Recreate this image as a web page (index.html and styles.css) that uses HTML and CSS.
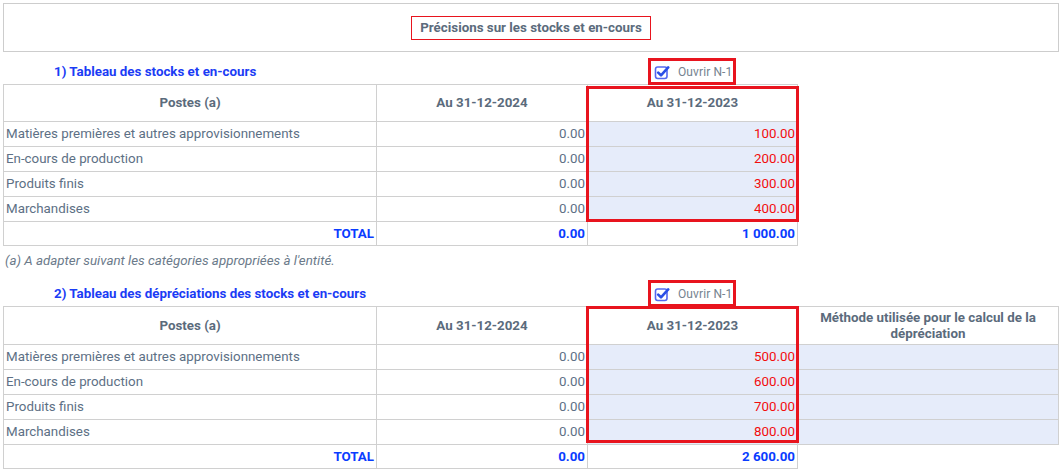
FILE: index.html
```html
<!DOCTYPE html>
<html lang="fr">
<head>
<meta charset="utf-8">
<title>Précisions sur les stocks et en-cours</title>
<link rel="stylesheet" href="styles.css">
</head>
<body>
<div class="page">
  <div class="title-box">
    <div class="title">Précisions sur les stocks et en-cours</div>
  </div>

  <div class="sec-head">
    <div class="sec-title">1) Tableau des stocks et en-cours</div>
    <label class="open-n1">
      <svg class="chk" width="16" height="16" viewBox="0 0 16 16"><rect x="1.5" y="3" width="11.5" height="11.5" rx="2.2" fill="#fff" stroke="#5468f0" stroke-width="1.6"/><path d="M4.2 8.6 L7 11.3 L14.2 3.4" fill="none" stroke="#2a4fe6" stroke-width="2.6" stroke-linecap="round" stroke-linejoin="round"/></svg>
      <span>Ouvrir N-1</span>
    </label>
  </div>

  <div class="tbl-wrap">
    <table class="tbl t1">
      <colgroup><col class="c1"><col class="c2"><col class="c3"></colgroup>
      <tr class="hrow"><th>Postes (a)</th><th>Au 31-12-2024</th><th>Au 31-12-2023</th></tr>
      <tr><td class="lbl">Matières premières et autres approvisionnements</td><td class="num">0.00</td><td class="num n1">100.00</td></tr>
      <tr><td class="lbl">En-cours de production</td><td class="num">0.00</td><td class="num n1">200.00</td></tr>
      <tr><td class="lbl">Produits finis</td><td class="num">0.00</td><td class="num n1">300.00</td></tr>
      <tr><td class="lbl">Marchandises</td><td class="num">0.00</td><td class="num n1">400.00</td></tr>
      <tr class="total"><td class="num">TOTAL</td><td class="num">0.00</td><td class="num">1 000.00</td></tr>
    </table>
    <div class="hl hl1"></div>
  </div>

  <div class="note">(a) A adapter suivant les catégories appropriées à l'entité.</div>

  <div class="sec-head">
    <div class="sec-title">2) Tableau des dépréciations des stocks et en-cours</div>
    <label class="open-n1">
      <svg class="chk" width="16" height="16" viewBox="0 0 16 16"><rect x="1.5" y="3" width="11.5" height="11.5" rx="2.2" fill="#fff" stroke="#5468f0" stroke-width="1.6"/><path d="M4.2 8.6 L7 11.3 L14.2 3.4" fill="none" stroke="#2a4fe6" stroke-width="2.6" stroke-linecap="round" stroke-linejoin="round"/></svg>
      <span>Ouvrir N-1</span>
    </label>
  </div>

  <div class="tbl-wrap">
    <table class="tbl t2">
      <colgroup><col class="c1"><col class="c2"><col class="c3"><col class="c4"></colgroup>
      <tr class="hrow h2"><th>Postes (a)</th><th>Au 31-12-2024</th><th>Au 31-12-2023</th><th>Méthode utilisée pour le calcul de la dépréciation</th></tr>
      <tr><td class="lbl">Matières premières et autres approvisionnements</td><td class="num">0.00</td><td class="num n1">500.00</td><td class="fill"></td></tr>
      <tr><td class="lbl">En-cours de production</td><td class="num">0.00</td><td class="num n1">600.00</td><td class="fill"></td></tr>
      <tr><td class="lbl">Produits finis</td><td class="num">0.00</td><td class="num n1">700.00</td><td class="fill"></td></tr>
      <tr><td class="lbl">Marchandises</td><td class="num">0.00</td><td class="num n1">800.00</td><td class="fill"></td></tr>
      <tr class="total"><td class="num">TOTAL</td><td class="num">0.00</td><td class="num">2 600.00</td></tr>
    </table>
    <div class="hl hl2"></div>
  </div>
</div>
</body>
</html>
```

FILE: styles.css
```css
html, body {
  margin: 0;
  padding: 0;
  background: #fff;
}
body {
  font-family: Roboto, "Liberation Sans", Arial, sans-serif;
  font-size: 13.33px;
  color: #5d7085;
}
.page {
  padding: 3px 3px 0 3px;
}
.title-box {
  height: 47px;
  border: 1px solid #cdcdcd;
  display: flex;
  align-items: center;
  justify-content: center;
}
.title {
  border: 1px solid #e8141e;
  height: 22px;
  line-height: 22px;
  padding: 0 8px;
  font-weight: 700;
  color: #5b6b7c;
}
.sec-head {
  display: grid;
  grid-template-columns: 373px 211px 210px;
  height: 32px;
  align-items: center;
}
.sec-title {
  padding-left: 51px;
  padding-top: 7px;
  font-weight: 700;
  color: #1b3cf5;
}
.open-n1 {
  grid-column: 3;
  justify-self: center;
  align-self: end;
  margin-bottom: -1px;
  position: relative;
  z-index: 2;
  box-sizing: border-box;
  height: 27px;
  width: 88px;
  border: 3px solid #e8141e;
  background: #fff;
  display: flex;
  align-items: center;
  gap: 8px;
  padding-left: 3px;
  font-size: 12px;
  letter-spacing: 0.1px;
  white-space: nowrap;
  color: #75838f;
}
.chk {
  display: block;
  flex: none;
}
.tbl-wrap {
  position: relative;
}
.tbl {
  border-collapse: collapse;
  table-layout: fixed;
}
.t1 { width: 795px; }
.t2 { width: 1056px; }
.c1 { width: 373px; }
.c2 { width: 211px; }
.c3 { width: 210px; }
.c4 { width: 261px; }
.tbl th, .tbl td {
  border: 1px solid #d0d0d0;
  padding: 0 2px;
  height: 24px;
  line-height: 16px;
  white-space: nowrap;
  overflow: hidden;
}
.tbl th {
  font-weight: 700;
  color: #5b6b7c;
  text-align: center;
  height: 36px;
}
.tbl .h2 th {
  height: 37px;
  white-space: normal;
  padding: 0 8px;
}
.tbl .total td {
  height: 23px;
  font-weight: 700;
  color: #0a3cff;
}
.lbl {
  text-align: left;
}
.num {
  text-align: right;
}
.n1 {
  background: #e6ecfa;
  color: #f20d0d;
}
.fill {
  background: #e6ecfa;
}
.hl {
  position: absolute;
  box-sizing: border-box;
  border: 3px solid #e8141e;
  left: 583px;
  width: 213px;
  pointer-events: none;
}
.hl1 {
  top: 2px;
  height: 136px;
}
.hl2 {
  top: 0;
  height: 137px;
}
.note {
  height: 28px;
  line-height: 30px;
  font-style: italic;
  padding-left: 2px;
  color: #6b7a8a;
}
```
